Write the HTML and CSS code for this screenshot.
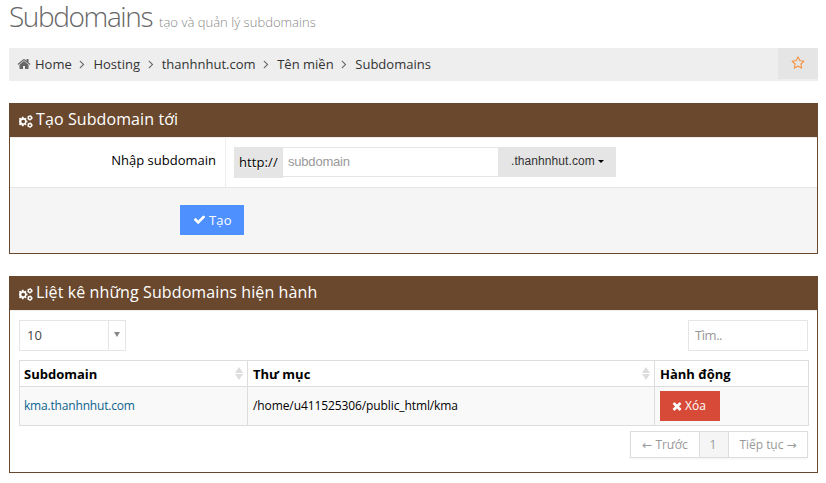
FILE: index.html
```html
<!DOCTYPE html>
<html lang="vi">
<head>
<meta charset="utf-8">
<title>Subdomains</title>
<link rel="stylesheet" href="styles.css">
</head>
<body>
<svg class="defs" aria-hidden="true">
  <symbol id="home" viewBox="0 0 1792 1792"><path d="M1472 992v480q0 26-19 45t-45 19h-384v-384h-256v384h-384q-26 0-45-19t-19-45v-480q0-1 .5-3t.5-3l575-474 575 474q1 2 1 6zm223-69l-62 74q-8 9-21 11h-3q-13 0-21-7l-692-577-692 577q-12 8-24 7-13-2-21-11l-62-74q-8-10-7-23.500t11-21.500l719-599q32-26 76-26t76 26l244 204v-195q0-14 9-23t23-9h192q14 0 23 9t9 23v408l219 182q10 8 11 21.500t-7 23.500z"/></symbol>
  <symbol id="angle" viewBox="0 0 1792 1792"><path d="M1171 960q0 13-10 23l-466 466q-10 10-23 10t-23-10l-50-50q-10-10-10-23t10-23l393-393-393-393q-10-10-10-23t10-23l50-50q10-10 23-10t23 10l466 466q10 10 10 23z"/></symbol>
  <symbol id="check" viewBox="0 0 1792 1792"><path d="M1671 566q0 40-28 68l-724 724-136 136q-28 28-68 28t-68-28l-136-136-362-362q-28-28-28-68t28-68l136-136q28-28 68-28t68 28l294 295 656-657q28-28 68-28t68 28l136 136q28 28 28 68z"/></symbol>
  <symbol id="times" viewBox="192 192 1408 1408"><path d="M1490 1322q0 40-28 68l-136 136q-28 28-68 28t-68-28l-294-294-294 294q-28 28-68 28t-68-28l-136-136q-28-28-28-68t28-68l294-294-294-294q-28-28-28-68t28-68l136-136q28-28 68-28t68 28l294 294 294-294q28-28 68-28t68 28l136 136q28 28 28 68t-28 68l-294 294 294 294q28 28 28 68z"/></symbol>
  <symbol id="star" viewBox="0 0 1792 1792"><path d="M1201 1004l306-297-422-62-189-382-189 382-422 62 306 297-73 421 378-199 377 199zm527-357q0 22-26 48l-363 354 86 500q1 7 1 20 0 50-41 50-19 0-40-12l-449-236-449 236q-22 12-40 12-21 0-31.500-14.500t-10.500-35.500q0-6 2-20l86-500-364-354q-25-27-25-48 0-37 56-46l502-73 225-455q19-41 49-41t49 41l225 455 502 73q56 9 56 46z"/></symbol>
  <symbol id="cogs" viewBox="0 0 1920 1792"><path fill-rule="evenodd" d="M832 896q0-106-75-181t-181-75-181 75-75 181 75 181 181 75 181-75 75-181zm320-91v185q0 10-7 19.500t-16 10.500l-155 24q-11 35-32 76 34 48 90 115 7 10 7 20 0 12-7 19-23 30-82.500 89.500t-78.500 59.500q-11 0-21-7l-115-90q-37 19-77 31-11 108-23 155-7 24-30 24h-186q-11 0-20-7.500t-10-17.500l-23-153q-34-10-75-31l-118 89q-7 7-20 7-11 0-21-8-144-133-144-160 0-9 7-19 10-14 41-53t47-61q-23-44-35-82l-152-24q-10-1-17-9.500t-7-19.500v-185q0-10 7-19.500t16-10.500l155-24q11-35 32-76-34-48-90-115-7-11-7-20 0-12 7-20 22-30 82-89t79-59q11 0 21 7l115 90q34-18 77-32 11-108 23-154 7-24 30-24h186q11 0 20 7.500t10 17.500l23 153q34 10 75 31l118-89q8-7 20-7 11 0 21 8 144 133 144 160 0 9-7 19-12 16-42 54t-45 60q23 48 34 82l152 23q10 2 17 10.500t7 19.500z"/><g fill="none" stroke="currentColor"><circle cx="1500" cy="384" r="230" stroke-width="200"/><circle cx="1500" cy="384" r="320" stroke-width="110" stroke-dasharray="168 167"/><circle cx="1500" cy="1408" r="230" stroke-width="200"/><circle cx="1500" cy="1408" r="320" stroke-width="110" stroke-dasharray="168 167"/></g></symbol>
</svg>

<header class="page-title"><h1>Subdomains</h1><small>tạo và quản lý subdomains</small></header>

<nav class="breadcrumb">
  <ol>
    <li><svg class="i-home"><use href="#home"/></svg>Home</li>
    <li><svg class="i-angle"><use href="#angle"/></svg>Hosting</li>
    <li><svg class="i-angle"><use href="#angle"/></svg>thanhnhut.com</li>
    <li><svg class="i-angle"><use href="#angle"/></svg>Tên miền</li>
    <li><svg class="i-angle"><use href="#angle"/></svg>Subdomains</li>
  </ol>
  <span class="favorite"><svg><use href="#star"/></svg></span>
</nav>

<section class="portlet">
  <h2><svg><use href="#cogs"/></svg>Tạo Subdomain tới</h2>
  <form>
    <div class="form-row">
      <label for="sub">Nhập subdomain</label>
      <div class="controls">
        <span class="addon">http://</span>
        <input id="sub" type="text" placeholder="subdomain">
        <button class="domain" type="button">.thanhnhut.com<i class="caret"></i></button>
      </div>
    </div>
    <div class="form-actions">
      <button class="btn blue" type="button"><svg><use href="#check"/></svg>Tạo</button>
    </div>
  </form>
</section>

<section class="portlet">
  <h2><svg><use href="#cogs"/></svg>Liệt kê những Subdomains hiện hành</h2>
  <div class="list">
    <div class="tools">
      <div class="select"><span>10</span><b><i></i></b></div>
      <input class="search" type="text" placeholder="Tìm..">
    </div>
    <table>
      <thead><tr>
        <th class="c1"><div>Subdomain<svg class="sort" viewBox="0 0 8 13"><path d="M0 6L4 0l4 6zM0 7h8l-4 6z"/></svg></div></th>
        <th class="c2"><div>Thư mục<svg class="sort" viewBox="0 0 8 13"><path d="M0 6L4 0l4 6zM0 7h8l-4 6z"/></svg></div></th>
        <th>Hành động</th>
      </tr></thead>
      <tbody><tr>
        <td><a>kma.thanhnhut.com</a></td>
        <td class="path">/home/u411525306/public_html/kma</td>
        <td><button class="btn red" type="button"><svg><use href="#times"/></svg>Xóa</button></td>
      </tr></tbody>
    </table>
    <ul class="pages"><li><span class="arrow">←</span> Trước</li><li class="current">1</li><li>Tiếp tục <span class="arrow">→</span></li></ul>
  </div>
</section>
</body>
</html>
```
FILE: styles.css
```css
* { box-sizing: border-box; }
body {
  margin: 0;
  padding: 0 8px 0 9px;
  font: 13px/20px "Open Sans", sans-serif;
  color: #000;
  background: #fff;
}
svg { fill: currentColor; flex: none; }
.defs { position: absolute; width: 0; height: 0; }
button, input { margin: 0; border: 0; padding: 0; border-radius: 0; font: inherit; }

.page-title { display: flex; align-items: baseline; height: 48px; line-height: 32px; }
h1 { margin: 0; font-size: 28px; font-weight: 300; letter-spacing: -1.4px; color: #666; }
.page-title small { margin-left: 7px; font-size: 13px; font-weight: 300; letter-spacing: .03px; color: #888; }

.breadcrumb { display: flex; justify-content: space-between; height: 33px; background: #eee; margin-bottom: 22px; }
.breadcrumb ol { display: flex; margin: 0; padding: 0 0 0 8px; list-style: none; color: #333; line-height: 32px; height: 32px; }
.breadcrumb li { display: flex; align-items: center; }
.i-home { width: 14px; height: 14px; margin: -1px 4px 0 0; color: #666; }
.i-angle { width: 14px; height: 14px; margin: 0 4px 0 3.7px; color: #666; }
.favorite { display: flex; align-items: center; justify-content: center; width: 40px; height: 31px; background: #e5e5e5; color: #f98a2f; }
.favorite svg { width: 14px; height: 14px; margin-top: -2px; }

.portlet { border: 1px solid #6a482d; border-top: 0; margin-bottom: 22px; }
.portlet h2 {
  display: flex; align-items: center;
  height: 34px; margin: 0 -1px; padding: 0 0 2px 10px;
  background: #6a482d; color: #fff;
  font-size: 16px; font-weight: 400; letter-spacing: .1px;
}
.portlet h2 svg { width: 14px; height: 13px; margin: 5px 3px 0 0; }

.form-row { display: flex; height: 51px; border-top: 1px solid #eee; border-bottom: 1px solid #e5e5e5; }
.form-row label { width: 216px; padding: 12px 9px 0 0; text-align: right; border-right: 1px solid #eee; }
.controls { display: flex; padding: 9px 0 0 8px; }
.addon { width: 49px; height: 31px; line-height: 31px; padding-left: 5px; letter-spacing: .1px; background: #e5e5e5; text-shadow: 0 1px 0 #fff; }
.controls input { width: 215px; height: 30px; padding: 0 5px 2px; border: solid #e5e5e5; border-width: 1px 0; font: 13px "Liberation Sans", sans-serif; letter-spacing: -.2px; }
input::placeholder { color: #999; opacity: 1; }
.domain { display: flex; align-items: center; width: 118px; height: 30px; padding: 0 0 2px 13px; background: #e5e5e5; color: #333; font: 12px "Liberation Sans", sans-serif; letter-spacing: .08px; }
.caret { margin: 1px 0 0 3px; border: 3px solid transparent; border-top-color: #000; border-bottom: 0; }
.form-actions { height: 65px; padding: 17px 0 0 170px; background: #f5f5f5; }
.btn { display: flex; align-items: center; height: 30px; padding-bottom: 1px; color: #fff; }
.blue { width: 64px; padding-left: 13px; background: #4d90fe; letter-spacing: .2px; }
.blue svg { width: 13px; height: 13px; margin-right: 3px; }

.list { height: 162px; padding: 9px 8px 0 9px; border-top: 1px solid #eee; }
.tools { display: flex; justify-content: space-between; padding-right: 1px; margin-bottom: 9px; }
.select { display: flex; width: 107px; height: 31px; border: 1px solid #e5e5e5; color: #444; line-height: 29px; }
.select span { flex: 1; padding-left: 7px; }
.select b { display: flex; align-items: center; justify-content: center; width: 17px; border-left: 1px solid #e5e5e5; }
.select i { margin-top: -3px; border: 3px solid transparent; border-top: 5px solid #888; border-bottom: 0; }
.search { width: 120px; height: 31px; padding: 0 6px 1px; border: 1px solid #e5e5e5; letter-spacing: -.45px; }

table { width: 790px; table-layout: fixed; border-collapse: collapse; }
th, td { border: 1px solid #ddd; padding: 0 5px 0 4px; text-align: left; }
th { height: 26px; font-weight: 700; }
th + th, td + td { padding-left: 5px; }
.c1 { width: 228px; }
.c2 { width: 407px; }
th div { display: flex; justify-content: space-between; align-items: center; }
.sort { width: 8px; height: 13px; color: #ddd; margin: -1px -1px 0 0; }
td { height: 39px; font-size: 12px; background: #f9f9f9; letter-spacing: -.18px; }
.path { letter-spacing: -.1px; }
td a { color: #0d638f; }
.red { width: 60px; padding-left: 12px; background: #d84a38; font-size: 12px; letter-spacing: .1px; }
.red svg { width: 10px; height: 10px; margin-right: 3px; }

.pages { display: flex; width: 178px; height: 27px; margin: 5px 1px 0 auto; padding: 0; list-style: none; border: 1px solid #ddd; box-shadow: 0 1px 2px rgba(0,0,0,.05); color: #999; font-size: 12px; line-height: 25px; text-align: center; letter-spacing: -.05px; }
.pages li { flex: 1; height: 25px; }
.pages li:first-child { flex: 0 0 68px; }
.pages .current { flex: 0 0 30px; padding-right: 2px; border: solid #ddd; border-width: 0 1px; background: #f5f5f5; }
.arrow { font-family: "DejaVu Sans", sans-serif; line-height: 1; }
```
